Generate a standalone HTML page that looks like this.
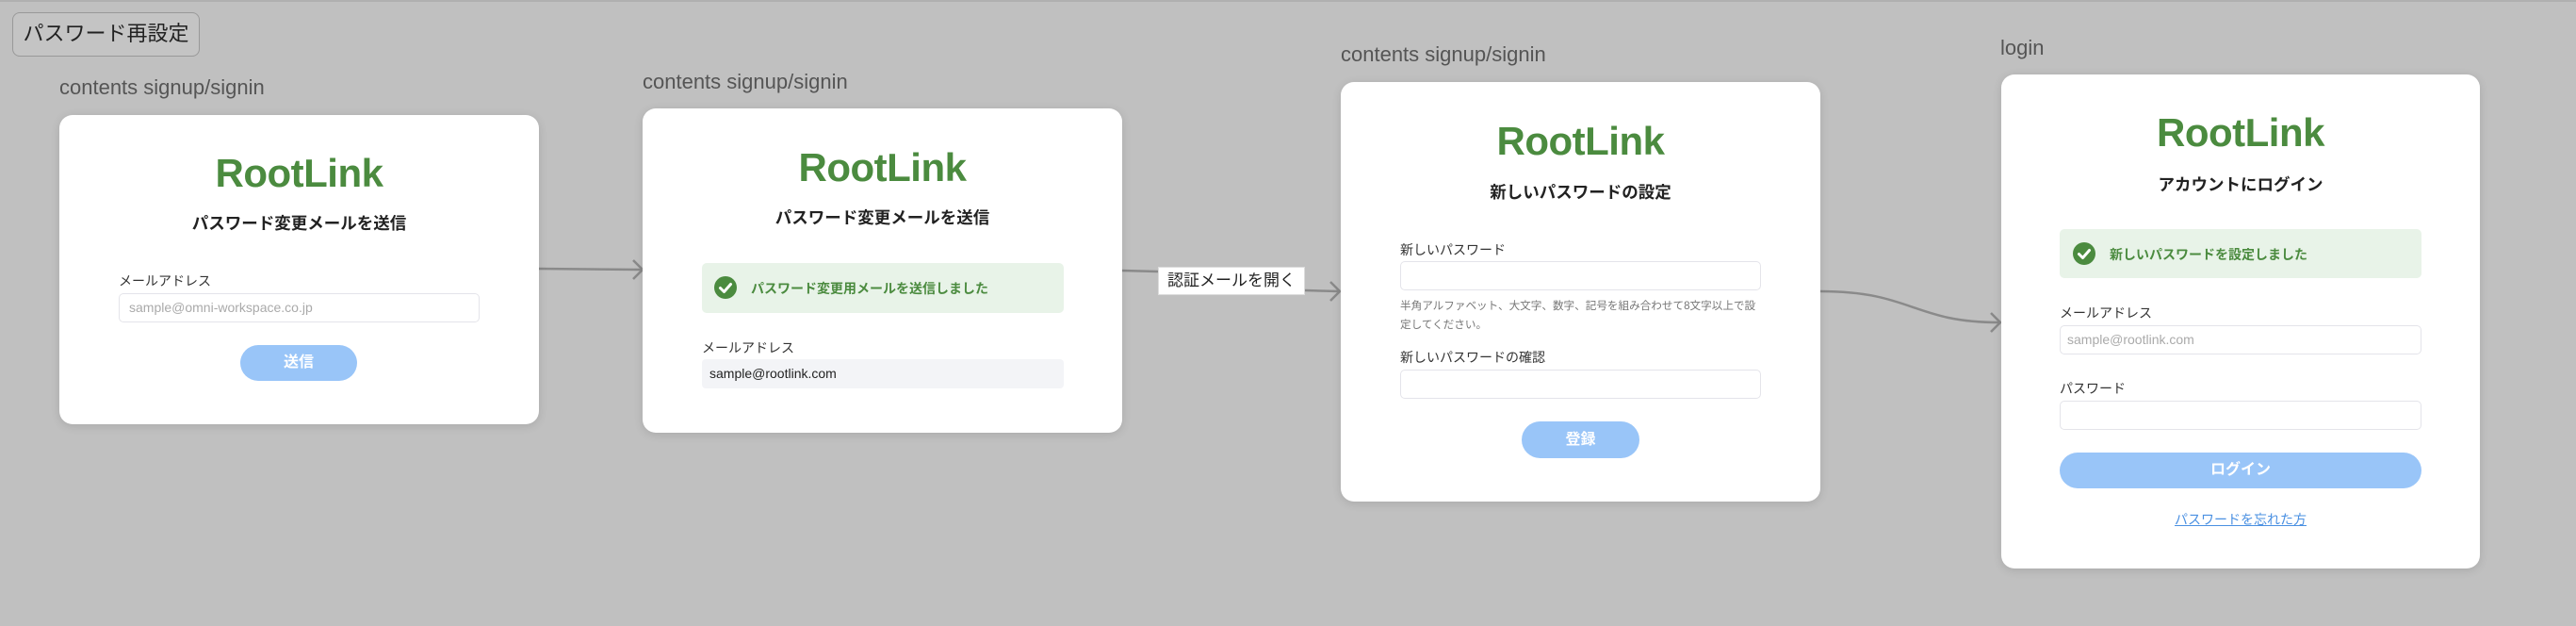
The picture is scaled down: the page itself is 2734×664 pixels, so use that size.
<!DOCTYPE html>
<html><head><meta charset="utf-8"><style>
*{margin:0;padding:0;box-sizing:border-box}
body{width:2734px;height:664px;background:#c0c0c0;position:relative;overflow:hidden;font-family:"Liberation Sans","Noto Sans CJK JP",sans-serif;color:#222}
.a{position:absolute}
.topbtn{left:13px;top:13px;width:199px;height:47px;border:1.5px solid #999;border-radius:8px;background:#c4c4c4;font-size:22px;line-height:44px;text-align:center;color:#222}
.lbl{font-size:22px;color:#555;white-space:nowrap}
.card{background:#fff;border-radius:14px;box-shadow:0 2px 10px rgba(0,0,0,.12)}
.logo{font-weight:bold;font-size:42px;color:#4b8b3f;white-space:nowrap;text-align:center;line-height:42px;letter-spacing:-0.5px}
.ttl{font-weight:bold;font-size:17.5px;text-align:center;white-space:nowrap;color:#222}
.fl{font-size:14px;color:#333;white-space:nowrap}
.inp{border:1.5px solid #e4e4ea;border-radius:5px;background:#fff}
.ph{font-size:14px;color:#aaa;line-height:28px;padding-left:10px;white-space:nowrap}
.btn{background:#99c5f8;border-radius:20px;color:#fff;font-weight:bold;font-size:16px;text-align:center}
.alert{background:#e8f3e8;border-radius:5px}
.at{font-size:14px;font-weight:bold;color:#4b8b3f;white-space:nowrap}
</style></head><body>
<div class="a" style="left:0;top:0;width:2734px;height:2px;background:#b0b0b0"></div>
<div class="a topbtn">パスワード再設定</div>

<svg class="a" style="left:0;top:0" width="2734" height="664">
<g fill="none" stroke="#8a8a8a" stroke-width="2.5">
<path d="M572 285 L680 286"/><path d="M672 276 L682 286 L672 296"/>
<path d="M1191 287 L1229 288"/>
<path d="M1385 308 L1421 309"/><path d="M1412 299 L1422 309 L1412 319"/>
<path d="M1932 309 C2030 309 2030 342 2122 342"/><path d="M2113 332 L2123 342 L2113 352"/>
</g></svg>

<!-- card1 -->
<div class="a lbl" style="left:63px;top:80px">contents signup/signin</div>
<div class="a card" style="left:63px;top:122px;width:509px;height:328px"></div>
<div class="a logo" style="left:63px;top:163px;width:509px">RootLink</div>
<div class="a ttl" style="left:63px;top:224px;width:509px">パスワード変更メールを送信</div>
<div class="a fl" style="left:126px;top:288px">メールアドレス</div>
<div class="a inp" style="left:126px;top:311px;width:383px;height:31px"><div class="ph">sample@omni-workspace.co.jp</div></div>
<div class="a btn" style="left:255px;top:366px;width:124px;height:38px;line-height:38px">送信</div>

<!-- card2 -->
<div class="a lbl" style="left:682px;top:74px">contents signup/signin</div>
<div class="a card" style="left:682px;top:115px;width:509px;height:344px"></div>
<div class="a logo" style="left:682px;top:157px;width:509px">RootLink</div>
<div class="a ttl" style="left:682px;top:218px;width:509px">パスワード変更メールを送信</div>
<div class="a alert" style="left:745px;top:279px;width:384px;height:53px"></div>
<svg class="a" style="left:758px;top:293px" width="24" height="24"><circle cx="12" cy="12" r="12" fill="#4b8b3f"/><path d="M6.5 12.5 L10.5 16.5 L17.5 8.5" fill="none" stroke="#fff" stroke-width="3" stroke-linecap="round" stroke-linejoin="round"/></svg>
<div class="a at" style="left:797px;top:296px">パスワード変更用メールを送信しました</div>
<div class="a fl" style="left:745px;top:359px">メールアドレス</div>
<div class="a" style="left:745px;top:381px;width:384px;height:31px;background:#f3f4f7;border-radius:4px;font-size:14px;line-height:31px;padding-left:8px;color:#222">sample@rootlink.com</div>

<div class="a" style="left:1229px;top:283px;width:156px;height:30px;background:#fff;border:1px solid #ddd;font-size:17px;line-height:28px;text-align:center;white-space:nowrap">認証メールを開く</div>

<!-- card3 -->
<div class="a lbl" style="left:1423px;top:45px">contents signup/signin</div>
<div class="a card" style="left:1423px;top:87px;width:509px;height:445px"></div>
<div class="a logo" style="left:1423px;top:129px;width:509px">RootLink</div>
<div class="a ttl" style="left:1423px;top:191px;width:509px">新しいパスワードの設定</div>
<div class="a fl" style="left:1486px;top:255px">新しいパスワード</div>
<div class="a inp" style="left:1486px;top:277px;width:383px;height:31px"></div>
<div class="a" style="left:1486px;top:315px;width:388px;font-size:11.6px;line-height:20px;color:#777">半角アルファベット、大文字、数字、記号を組み合わせて8文字以上で設定してください。</div>
<div class="a fl" style="left:1486px;top:369px">新しいパスワードの確認</div>
<div class="a inp" style="left:1486px;top:392px;width:383px;height:31px"></div>
<div class="a btn" style="left:1615px;top:447px;width:125px;height:39px;line-height:39px">登録</div>

<!-- card4 -->
<div class="a lbl" style="left:2123px;top:38px">login</div>
<div class="a card" style="left:2124px;top:79px;width:508px;height:524px"></div>
<div class="a logo" style="left:2124px;top:120px;width:508px">RootLink</div>
<div class="a ttl" style="left:2124px;top:183px;width:508px">アカウントにログイン</div>
<div class="a alert" style="left:2186px;top:243px;width:384px;height:52px"></div>
<svg class="a" style="left:2200px;top:257px" width="24" height="24"><circle cx="12" cy="12" r="12" fill="#4b8b3f"/><path d="M6.5 12.5 L10.5 16.5 L17.5 8.5" fill="none" stroke="#fff" stroke-width="3" stroke-linecap="round" stroke-linejoin="round"/></svg>
<div class="a at" style="left:2239px;top:260px">新しいパスワードを設定しました</div>
<div class="a fl" style="left:2186px;top:322px">メールアドレス</div>
<div class="a inp" style="left:2186px;top:345px;width:384px;height:31px"><div class="ph" style="padding-left:7px">sample@rootlink.com</div></div>
<div class="a fl" style="left:2186px;top:402px">パスワード</div>
<div class="a inp" style="left:2186px;top:425px;width:384px;height:31px"></div>
<div class="a btn" style="left:2186px;top:480px;width:384px;height:38px;line-height:38px">ログイン</div>
<div class="a" style="left:2124px;top:541px;width:508px;text-align:center;font-size:14px;color:#4a90e2;text-decoration:underline">パスワードを忘れた方</div>
</body></html>
